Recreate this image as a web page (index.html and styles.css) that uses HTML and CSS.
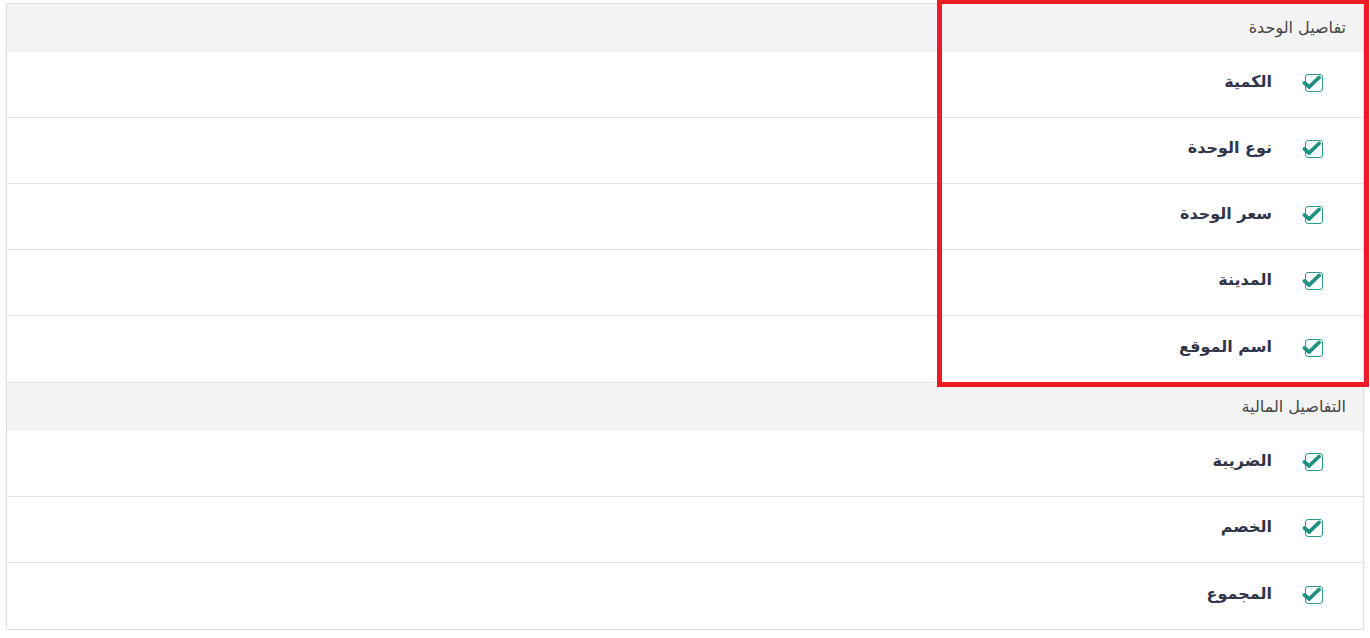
FILE: index.html
```html
<!DOCTYPE html>
<html lang="ar" dir="rtl">
<head>
    <meta charset="utf-8">
    <link rel="stylesheet" href="styles.css">
</head>
<body>
    <div class="fields-panel">
        <!-- Unit details -->
        <div class="group-head">تفاصيل الوحدة</div>
        <div class="field-row"><span class="check"></span><span class="field-name">الكمية</span></div>
        <div class="field-row"><span class="check"></span><span class="field-name">نوع الوحدة</span></div>
        <div class="field-row"><span class="check"></span><span class="field-name">سعر الوحدة</span></div>
        <div class="field-row"><span class="check"></span><span class="field-name">المدينة</span></div>
        <div class="field-row"><span class="check"></span><span class="field-name">اسم الموقع</span></div>

        <!-- Financial details -->
        <div class="group-head">التفاصيل المالية</div>
        <div class="field-row"><span class="check"></span><span class="field-name">الضريبة</span></div>
        <div class="field-row"><span class="check"></span><span class="field-name">الخصم</span></div>
        <div class="field-row"><span class="check"></span><span class="field-name">المجموع</span></div>
    </div>

    <div class="highlight"></div>

    <script>
        // put the check glyph into every checkbox
        var tick = '<svg viewBox="0 0 20 15" width="20" height="15"><path d="M2.5 8 L7.2 12 L17 2.5" fill="none" stroke="#1f8f7f" stroke-width="3.8" stroke-linecap="round" stroke-linejoin="round"/></svg>';
        document.querySelectorAll('.check').forEach(function(box) {
            box.innerHTML = tick;
        });
    </script>
</body>
</html>
```

FILE: styles.css
```css
* {
    box-sizing: border-box;
}

body {
    margin: 0;
    padding: 3px 6px 0 6px;
    background: #fff;
    font-family: "DejaVu Sans", "Noto Sans", sans-serif;
    color: #333;
}

.fields-panel {
    border: 1px solid #dedede;
    box-shadow: 0 2px 2px rgba(0,0,0,0.1);
    background: #fff;
}

.group-head {
    height: 48px;
    display: flex;
    align-items: center;
    padding-right: 17px;
    padding-bottom: 2px;
    background: #f3f3f3;
    font-size: 16px;
    color: #454545;
}

.field-row {
    height: 66px;
    display: flex;
    align-items: center;
    gap: 33px;
    padding-right: 40px;
    border-bottom: 1px solid #e3e3e3;
}

.field-row:nth-child(6) {
    height: 67px;
}

.field-row:last-child {
    border-bottom: none;
}

.check {
    position: relative;
    width: 18px;
    height: 18px;
    border: 1.5px solid #2a9d8f;
    border-radius: 3px;
    flex-shrink: 0;
    margin-bottom: 3px;
}

.check svg {
    position: absolute;
    top: 0;
    right: 0;
}

.field-name {
    font-size: 16px;
    font-weight: bold;
    color: #313548;
    padding-bottom: 6px;
}

.highlight {
    position: absolute;
    top: -1px;
    left: 937px;
    width: 432px;
    height: 388px;
    border: 5px solid #ed1c24;
}
```
